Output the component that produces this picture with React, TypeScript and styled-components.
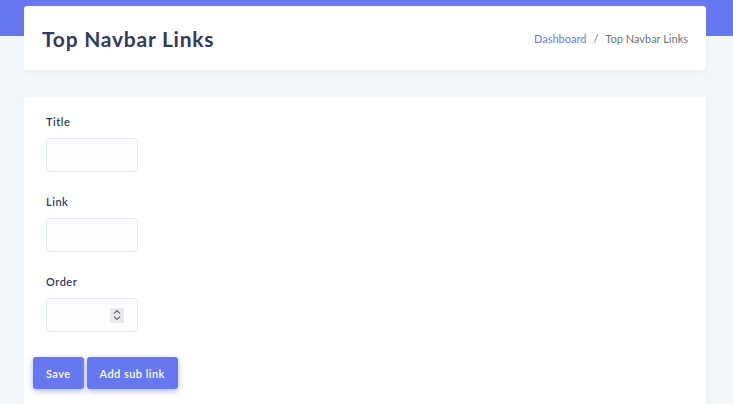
import React from 'react';
import styled, { createGlobalStyle } from 'styled-components';

const GlobalStyle = createGlobalStyle`
  body {
    margin: 0;
    background: #f4f6f9;
    font-family: 'Lato', 'Noto Sans', sans-serif;
  }
`;

const Page = styled.div`
  height: 404px;
  overflow: hidden;
  padding: 6px 27px 0 24px;
  box-sizing: border-box;
  background: linear-gradient(#6777ef 0, #6777ef 36px, #f4f6f9 36px);
`;

const HeaderCard = styled.div`
  height: 64px;
  padding: 0 18px;
  background: #fff;
  border-radius: 3px;
  box-shadow: 0 4px 8px rgba(0, 0, 0, 0.03);
  display: flex;
  align-items: center;
  justify-content: space-between;
`;

const PageTitle = styled.h1`
  margin: 0;
  font-size: 21px;
  font-weight: 700;
  letter-spacing: 0.75px;
  color: #34395e;
`;

const Crumbs = styled.div`
  display: flex;
  align-items: center;
  gap: 7px;
  font-size: 11px;
  color: #6c757d;
`;

const CrumbLink = styled.a`
  color: #6777ef;
  text-decoration: none;
`;

const Card = styled.div`
  margin-top: 27px;
  height: 320px;
  padding: 17px 22px 0;
  background: #fff;
  border-radius: 3px;
  box-shadow: 0 4px 8px rgba(0, 0, 0, 0.03);
`;

const FormGroup = styled.div`
  margin-bottom: 22px;
`;

const Label = styled.label`
  display: block;
  margin-bottom: 8px;
  font-size: 11px;
  line-height: 16px;
  font-weight: 600;
  letter-spacing: 0.5px;
  color: #34395e;
`;

const InputBox = styled.div`
  width: 92px;
  height: 34px;
  box-sizing: border-box;
  border: 1px solid #e4e6fc;
  border-radius: 3px;
  background: #fdfdff;
  display: flex;
  align-items: center;
  padding-right: 13px;
`;

const Input = styled.input`
  flex: 1;
  min-width: 0;
  height: 100%;
  border: 0;
  background: transparent;
  outline: none;
  padding: 0 10px;
  font: inherit;
`;

const Spinner = styled.span`
  width: 14px;
  height: 15px;
  background: #e9e9ed;
  display: flex;
  align-items: center;
  justify-content: center;
`;

const Actions = styled.div`
  display: flex;
  gap: 3px;
  margin: 25px 0 0 -13px;
`;

const Button = styled.button`
  height: 32px;
  padding: 0 13px;
  border: 0;
  border-radius: 3px;
  background: #6777ef;
  box-shadow: 0 2px 6px #acb5f6;
  color: #fff;
  font-family: inherit;
  font-size: 11px;
  font-weight: 600;
  letter-spacing: 0.45px;
`;

const fields = [
  { name: 'Title', spin: false },
  { name: 'Link', spin: false },
  { name: 'Order', spin: true },
];

export default function App() {
  return (
    <>
      <GlobalStyle />
      <Page>
        <HeaderCard>
          <PageTitle>Top Navbar Links</PageTitle>
          <Crumbs>
            <CrumbLink href="#">Dashboard</CrumbLink>
            <span>/</span>
            <span>Top Navbar Links</span>
          </Crumbs>
        </HeaderCard>
        <Card>
          {fields.map((f) => (
            <FormGroup key={f.name}>
              <Label>{f.name}</Label>
              <InputBox>
                <Input type="text" />
                {f.spin && (
                  <Spinner>
                    <svg width="8" height="12" viewBox="0 0 8 12" fill="none" stroke="#6b6b75" strokeWidth="1.1">
                      <path d="M1 4.5 L4 1.5 L7 4.5" />
                      <path d="M1 7.5 L4 10.5 L7 7.5" />
                    </svg>
                  </Spinner>
                )}
              </InputBox>
            </FormGroup>
          ))}
          <Actions>
            <Button>Save</Button>
            <Button>Add sub link</Button>
          </Actions>
        </Card>
      </Page>
    </>
  );
}
